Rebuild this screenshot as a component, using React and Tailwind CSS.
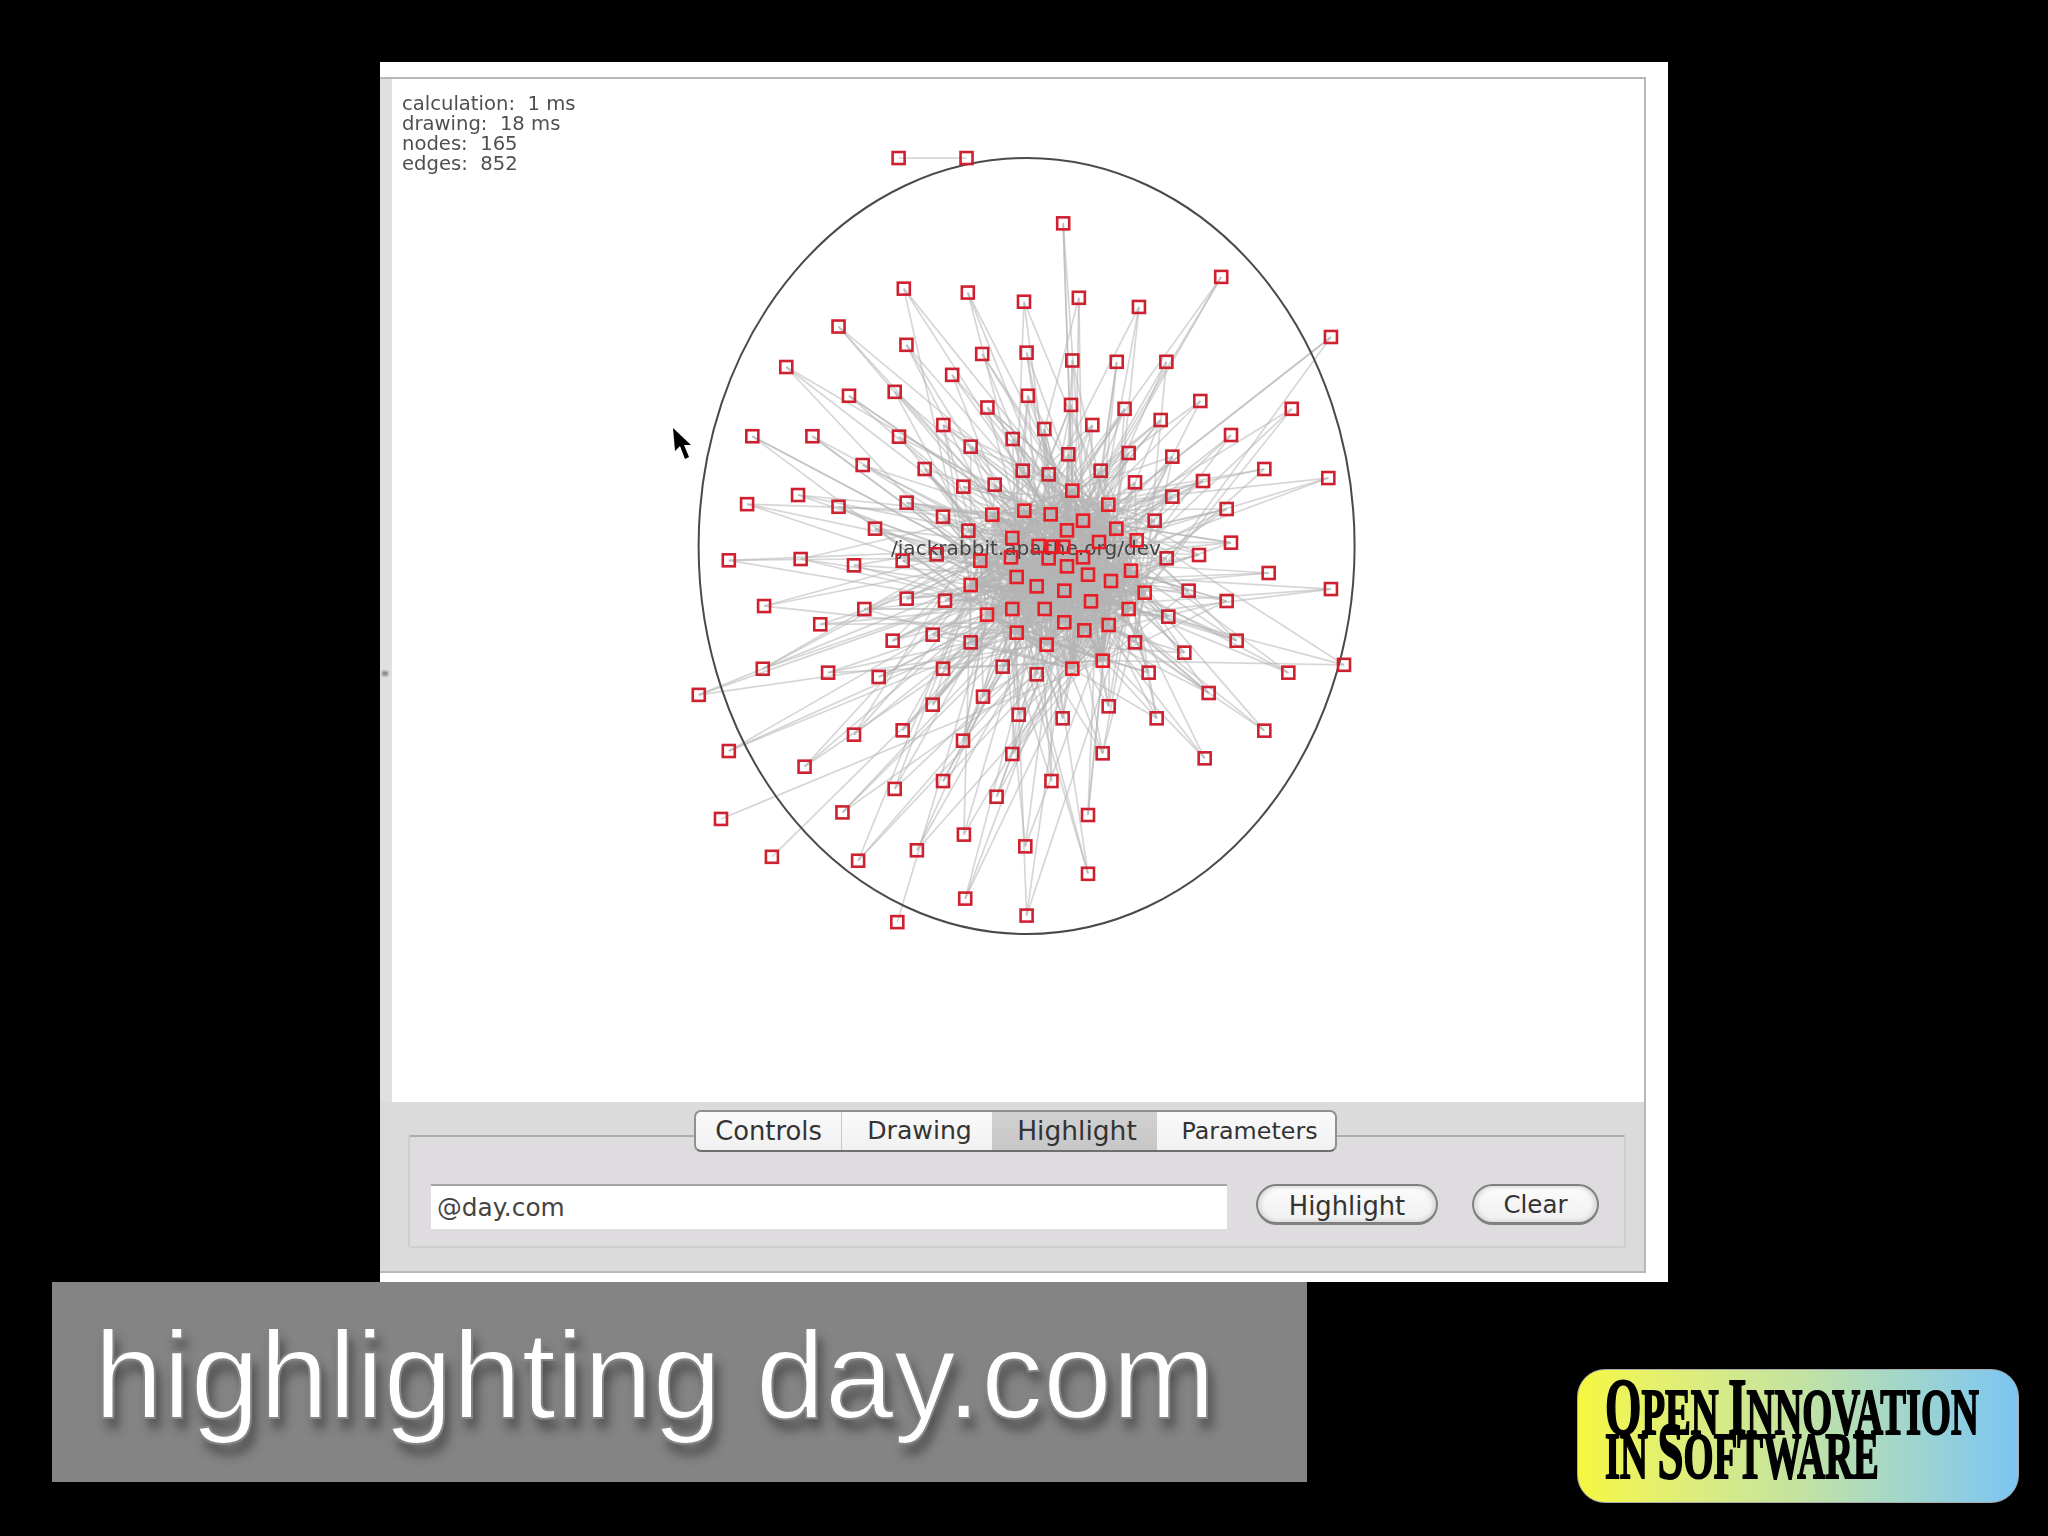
const D = [
[688,121],[740,121],[814,171],[935,212],[692,221],[741,224],[784,231],[826,228],[872,235],[642,250],[1019,258],[694,264],[752,271],[786,270],[821,276],[855,277],[893,277],[602,281],[729,287],[685,300],[650,303],[787,303],[756,312],[820,310],[861,313],[919,307],[989,313],[576,334],[622,334],[1017,366],[572,386],[611,379],[642,388],[558,429],[613,428],[1019,451],[585,464],[628,478],[1029,509],[584,512],[634,515],[535,532],[558,575],[616,587],[552,627],[645,622],[591,656],[657,659],[685,604],[702,651],[722,598],[738,639],[763,610],[805,598],[833,624],[785,648],[833,669],[739,688],[786,701],[687,706],
];
const Z = [
[280,15],[147,50],[362,80],[488,57],[583,27],[727,15],[932,0],[1143,45],[38,135],[224,147],[655,103],[836,99],[967,110],[1243,147],[518,152],[596,163],[752,152],[855,187],[1059,183],[340,200],[434,194],[667,212],[967,230],[170,248],[523,272],[775,254],[1130,267],[279,290],[427,284],[602,283],[914,302],[75,326],[355,332],[699,302],[651,331],[799,326],[487,354],[566,378],[610,380],[640,380],[747,366],[860,361],[1143,368],[158,422],[260,403],[391,422],[483,412],[596,415],[699,412],[950,415],[1047,405],[12,436],[651,439],[843,452],[1256,459],[500,471],[714,464],[783,483],[362,495],[560,499],[643,512],[884,518],[1016,512],[170,536],[285,542],[487,567],[584,567],[723,544],[836,567],[1130,543],[43,567],[411,584],[955,590],[643,607],[703,631],[776,615],[128,662],[248,644],[362,667],[500,638],[590,674],[855,667],[1160,662],[1003,698],[86,771],[279,746],[458,740],[560,763],[667,746],[758,722],[896,758],[1315,758],[1076,819],[399,830],[248,854],[776,859],[506,884],[638,895],[920,895],[12,944],[158,931],[339,962],[1243,932],[487,1002],[758,1000],[1064,1015],
];
const K = 2048 / 1568;
const nodes = [
  ...D.map(([x, y]) => [x * K, y * K]),
  ...Z.map(([x, y]) => [850 + x / 3, 420 + y / 3]),
];
const CX = 1058;
const CY = 575;
const hub = nodes.filter(([x, y]) => Math.hypot(x - CX, y - CY) < 100);
let seed = 12345;
const rnd = () => {
  seed = (seed * 1664525 + 1013904223) % 4294967296;
  return seed / 4294967296;
};
const edges = [];
nodes.forEach((n, i) => {
  if (i === 0) {
    edges.push([nodes[0], nodes[1]]);
    return;
  }
  if (i === 1) return;
  const dist = Math.hypot(n[0] - CX, n[1] - CY);
  const count = dist > 380 ? 1 : dist > 200 ? 3 : dist > 100 ? 5 : 14;
  for (let k = 0; k < count; k++) {
    edges.push([n, hub[Math.floor(rnd() * hub.length)]]);
  }
});

function Graph() {
  return (
    <svg viewBox="392 79 1252 1023" className="block w-full h-full blur-[0.6px]">
      {edges.map(([a, b], i) => (
        <line key={i} x1={a[0]} y1={a[1]} x2={b[0]} y2={b[1]} stroke="#b4b4b4" strokeWidth="1.7" strokeOpacity="0.55" />
      ))}
      <ellipse cx="1026.6" cy="546" rx="328" ry="388" fill="none" stroke="#4a4a4a" strokeWidth="2" />
      <text x="891" y="555" fontSize="20.1" fill="#444" fontFamily="'DejaVu Sans', sans-serif">/jackrabbit.apache.org/dev</text>
      {nodes.map(([x, y], i) => (
        <rect
          key={i}
          x={x - 6}
          y={y - 6}
          width="12"
          height="12"
          fill="none"
          stroke={Math.hypot(x - CX, y - CY) < 100 ? "#ea1c24" : "#cf2030"}
          strokeWidth="2.6"
        />
      ))}
      <polygon points="673,428 675,451 680,446 685,459 689,457 684,445 691,445" fill="#000" />
    </svg>
  );
}

function Tab({ label, active, className }) {
  return (
    <div className={`flex items-center justify-center h-full ${active ? "bg-gradient-to-b from-[#d2d1d2] to-[#c8c7c8]" : ""} ${className}`}>
      {label}
    </div>
  );
}

function Pill({ label, className }) {
  return (
    <button className={`h-[41px] pt-[1px] rounded-full border-2 border-[#808080] border-b-[3px] bg-gradient-to-b from-[#fbfbfb] to-[#f1f0f1] text-[#333] shadow-[inset_3px_0_4px_#d8d8d8,inset_-3px_0_4px_#d8d8d8] ${className}`}>
      {label}
    </button>
  );
}

function Big({ children }) {
  return <span className="text-[80px]">{children}</span>;
}

export default function App() {
  return (
    <div className="w-[2048px] h-[1536px] bg-black overflow-hidden flex flex-col pt-[62px] font-['Liberation_Sans',sans-serif]">
      <div className="ml-[380px] w-[1288px] h-[1220px] shrink-0 bg-white pt-[15px]">
        <div className="w-[1266px] h-[1196px] flex flex-col border-t-2 border-r-2 border-b-2 border-[#b8b8b8] bg-[#dcdbdc] font-['DejaVu_Sans',sans-serif]">
          <div className="relative h-[1023px] shrink-0 border-l-[12px] border-[#e0e0e0] bg-white">
            <Graph />
            <div className="absolute left-[10px] top-[15px] text-[19.6px] leading-[20px] text-[#505050] whitespace-pre blur-[0.4px]">
              <div>calculation:  1 ms</div>
              <div>drawing:  18 ms</div>
              <div>nodes:  165</div>
              <div>edges:  852</div>
            </div>
            <div className="absolute -left-[10px] top-[592px] w-[6px] h-[5px] bg-[#8a8a8a] blur-[1px]" />
          </div>
          <div className="flex-1 pt-[33px] px-[28px]">
            <div className="w-[1218px] h-[113px] border-2 border-[#cfcecf] rounded-[3px] bg-[#dedcde] border-t-[#adacad]">
              <div className="flex justify-center -mt-[27px]">
                <div className="-ml-[3px] w-[643px] h-[42px] flex rounded-[7px] border-2 border-[#909090] border-b-[#6f6f6f] bg-gradient-to-b from-[#fafafa] to-[#f2f1f2] text-[#333] overflow-hidden">
                  <Tab label="Controls" className="w-[146px] border-r border-[#c8c8c8] text-[25.8px]" />
                  <Tab label="Drawing" className="w-[150px] pl-[5px] text-[25.2px]" />
                  <Tab label="Highlight" active className="w-[165px] pl-[5px] text-[26.5px]" />
                  <Tab label="Parameters" className="w-[178px] pt-[1px] pl-[7px] text-[23.8px]" />
                </div>
              </div>
              <div className="flex items-start mt-[32px] pl-[21px]">
                <input
                  readOnly
                  value="@day.com"
                  className="w-[796px] h-[45px] pl-[6px] bg-white border-t-2 border-[#a3a3a3] text-[24.8px] text-[#444] outline-none"
                />
                <Pill label="Highlight" className="ml-[29px] w-[182px] text-[25.8px]" />
                <Pill label="Clear" className="ml-[34px] w-[127px] text-[24.5px]" />
              </div>
            </div>
          </div>
        </div>
      </div>
      <div className="flex items-start">
        <div className="ml-[52px] w-[1255px] h-[200px] shrink-0 bg-[#858484] pl-[42px] pt-[23px]">
          <div className="text-[124px] leading-[140px] text-white whitespace-nowrap [-webkit-text-stroke:2px_#858484] [text-shadow:5px_11px_11px_rgba(0,0,0,0.42)]">
            highlighting day.com
          </div>
        </div>
        <div className="ml-[270px] mt-[87px] w-[442px] h-[134px] shrink-0 rounded-[28px] border border-[#a9a9a9] bg-gradient-to-r from-[#f6f73c] via-[#c4e3a0] to-[#7cc5f3] pl-[27px] pt-[13px]">
          <div className="w-[700px] font-['Liberation_Serif',serif] font-bold text-black text-[66px] leading-[46px] whitespace-nowrap origin-left [transform:scaleX(0.585)] [-webkit-text-stroke:2px_black]">
            <div className="h-[52px] flex items-end"><span><Big>O</Big>PEN <Big>I</Big>NNOVATION</span></div>
            <div className="h-[44px] flex items-end"><span>IN <Big>S</Big>OFTWARE</span></div>
          </div>
        </div>
      </div>
    </div>
  );
}
